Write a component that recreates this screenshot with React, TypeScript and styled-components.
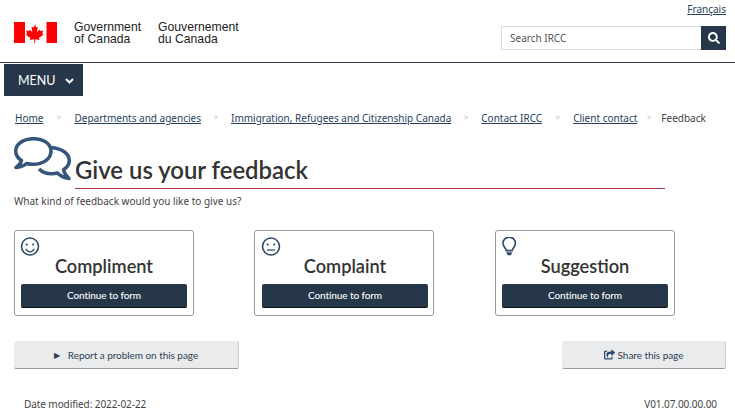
import React from "react";
import styled, { createGlobalStyle } from "styled-components";
import { FaSearch, FaShareSquare } from "react-icons/fa";

const Global = createGlobalStyle`
  html, body { margin: 0; padding: 0; background: #fff; }
  body { font-family: "Noto Sans", sans-serif; color: #333; width: 735px; height: 417px; overflow: hidden; }
`;

const Page = styled.div`display: flex; flex-direction: column; width: 735px;`;
const Header = styled.header`
  display: flex; justify-content: space-between; height: 62px; padding: 0 9px 0 14px;
  border-bottom: 1px solid #2e3a4d;
`;
const Brand = styled.div`display: flex; align-items: flex-start; padding-top: 21px;`;
const Flag = styled.svg`width: 43px; height: 22px; margin-right: 17px; margin-top: 1px;`;
const Signature = styled.div`
  font: 12.2px/11.5px "Liberation Sans", sans-serif; color: #222; margin: 1px 17px 0 0;
`;
const Tools = styled.div`display: flex; flex-direction: column; align-items: flex-end;`;
const Lang = styled.a`font-size: 10px; line-height: 14px; margin-top: 2px; color: #284162; text-decoration: underline;`;
const Search = styled.div`display: flex; width: 225px; height: 24px; margin-top: 10px;`;
const SearchInput = styled.div`
  flex: 1; border: 1px solid #dcdcdc; border-right: 0; font-size: 10px; line-height: 22px;
  padding-left: 8px; color: #555;
`;
const SearchButton = styled.div`
  width: 25px; background: #26374a; color: #fff; display: flex; align-items: center; justify-content: center;
`;
const MenuButton = styled.div`
  display: flex; align-items: center; width: 79px; height: 32px; margin: 1px 0 0 4px; padding-left: 14px; box-sizing: border-box;
  background: #26374a; color: #fff; font: 12.5px "Lato", sans-serif;
`;
const Chevron = styled.svg`width: 9px; height: 6px; margin-left: 9px; margin-top: 1px;`;
const Crumbs = styled.nav`
  display: flex; align-items: center; margin: 15px 0 0 15px; height: 14px; font-size: 10px; line-height: 14px;
`;
const Crumb = styled.a`color: #284162; text-decoration: underline;`;
const Sep = styled.span<{ $w: number }>`
  width: ${p => p.$w}px; text-align: center; color: #bbb; font-size: 7px; flex: none;
`;
const Current = styled.span`color: #444;`;
const TitleRow = styled.div`display: flex; align-items: flex-end; margin: 12px 0 0 14px; width: 651px;`;
const TitleIcon = styled.svg`width: 58px; height: 44px; margin-right: 3px; margin-bottom: 8px; flex: none;`;
const Title = styled.h1`
  flex: 1; margin: 0; font: 600 23.9px/31px "Lato", sans-serif; color: #333; border-bottom: 1px solid #af3c43; padding-bottom: 3px;
`;
const Question = styled.p`margin: 5px 0 0 14px; font-size: 10px; line-height: 14px; color: #444;`;
const Cards = styled.div`display: flex; margin: 22px 0 0 14px;`;
const Card = styled.div<{ $gap: number; $left: number }>`
  display: flex; flex-direction: column; box-sizing: border-box; width: 180px; height: 86px; margin-right: ${p => p.$gap}px;
  border: 1px solid #999; border-radius: 3px; padding: 6px ${p => 12 - p.$left}px 7px ${p => p.$left}px;
`;
const CardIcon = styled.svg`width: 20px; height: 20px; display: block; margin-left: -1px;`;
const CardTitle = styled.h2`
  margin: -4px 0 0; height: 31px; font: 600 18.2px/27px "Lato", sans-serif; color: #333; text-align: center;
`;
const ContinueButton = styled.div`
  height: 24px; background: #26374a; border-radius: 2px; border-bottom: 1px solid #111; box-sizing: border-box;
  color: #fff; font: 500 10px/23px "Lato", sans-serif; letter-spacing: -0.1px; text-align: center;
`;
const Actions = styled.div`display: flex; justify-content: space-between; margin: 25px 9px 0 14px;`;
const ActionButton = styled.div<{ $w: number }>`
  display: flex; align-items: center; justify-content: center; gap: 3px; box-sizing: border-box; width: ${p => p.$w}px; height: 28px;
  background: #eaebed; border-radius: 2px; border-bottom: 1px solid #999; border-right: 1px solid #ccc;
  font: 10px "Lato", sans-serif; letter-spacing: -0.05px; color: #2f3f52;
`;
const Tri = styled.span`font-size: 8px; margin-right: 5px; color: #2f3f52;`;
const Footer = styled.div`
  display: flex; justify-content: space-between; margin: 28px 18px 0 24px; font-size: 10px; line-height: 14px; color: #444; letter-spacing: -0.08px;
`;

const stroke = { fill: "none", stroke: "#2f4a6d", strokeWidth: 1.6 };

const Smile = () => (
  <CardIcon viewBox="0 0 20 20">
    <circle cx="10" cy="9.500" r="8.500" {...stroke} />
    <circle cx="6.800" cy="7.500" r="1.100" fill="#2f4a6d" />
    <circle cx="13.200" cy="7.500" r="1.100" fill="#2f4a6d" />
    <path d="M5.800 11.800c1 2 2.500 3 4.200 3s3.200-1 4.200-3" {...stroke} strokeWidth="1.300" />
  </CardIcon>
);
const Neutral = () => (
  <CardIcon viewBox="0 0 20 20">
    <circle cx="10" cy="9.500" r="8.500" {...stroke} />
    <circle cx="6.800" cy="7.500" r="1.100" fill="#2f4a6d" />
    <circle cx="13.200" cy="7.500" r="1.100" fill="#2f4a6d" />
    <path d="M6 13h8" {...stroke} strokeWidth="1.300" />
  </CardIcon>
);
const Bulb = () => (
  <CardIcon viewBox="0 0 20 20">
    <path d="M5.300 13.600c-.3-2.400-3.300-4-3.300-7.300a6.200 6.200 0 0 1 12.400 0c0 3.300-3 4.900-3.300 7.300z" {...stroke} />
    <path d="M5.600 15.200h5.200v1.500l-1.200 1.500H6.800l-1.200-1.500z" fill="#2f4a6d" />
  </CardIcon>
);

const forms = [
  { t: "Compliment", I: Smile, g: 60, l: 6 },
  { t: "Complaint", I: Neutral, g: 61, l: 7 },
  { t: "Suggestion", I: Bulb, g: 0, l: 6 },
];

export default function App() {
  return (
    <Page>
      <Global />
      <Header>
        <Brand>
          <Flag viewBox="0 0 43 22">
            <rect width="43" height="22" fill="#fff" />
            <rect width="11" height="21" fill="#f00" />
            <rect x="32.500" width="10.500" height="21" fill="#f00" />
            <path fill="#f00" d="M21.500 2l-2 3.500-2-.8.8 5.300-2.600-2.600-.6 1.700-3-.5.9 3.200-1.300.7 4.700 3.600-.7 1.800 4.500-.6V21h.9v-3.700l4.500.6-.7-1.800 4.700-3.600-1.300-.7.9-3.200-3 .5-.6-1.700-2.600 2.600.8-5.300-2 .8z" />
          </Flag>
          <Signature>Government<br />of Canada</Signature>
          <Signature>Gouvernement<br />du Canada</Signature>
        </Brand>
        <Tools>
          <Lang>Français</Lang>
          <Search>
            <SearchInput>Search IRCC</SearchInput>
            <SearchButton><FaSearch size={12} /></SearchButton>
          </Search>
        </Tools>
      </Header>
      <MenuButton>
        MENU
        <Chevron viewBox="0 0 9 6"><path d="M1 1l3.500 3.500L8 1" fill="none" stroke="#fff" strokeWidth="2" /></Chevron>
      </MenuButton>
      <Crumbs>
        <Crumb>Home</Crumb><Sep $w={31}>&gt;</Sep>
        <Crumb>Departments and agencies</Crumb><Sep $w={30}>&gt;</Sep>
        <Crumb>Immigration, Refugees and Citizenship Canada</Crumb><Sep $w={30}>&gt;</Sep>
        <Crumb>Contact IRCC</Crumb><Sep $w={31}>&gt;</Sep>
        <Crumb>Client contact</Crumb><Sep $w={24}>&gt;</Sep>
        <Current>Feedback</Current>
      </Crumbs>
      <TitleRow>
        <TitleIcon viewBox="0 0 58 44">
          <g fill="none" stroke="#34557c" strokeWidth="3.500" strokeLinejoin="round">
            <path d="M19.500 1.700C9.500 1.700 1.700 7 1.700 14c0 4 2.300 7.200 5.800 9.500-.6 2.500-2.500 5-5.500 7 4.500-.3 8-1.800 10.500-4 2 .5 4.200.8 6.500.8 10 0 18-5.500 18-13S29.500 1.700 19.500 1.700z" />
            <path d="M37 10.500c10 .8 18.300 5.500 18.300 13 0 3.800-2.300 7-5.800 9.300.6 3.200 2.500 6 5.500 8.700-5-.8-9-2.800-11.500-5.500-2 .5-3.500.7-5.500.7-5.500 0-10-1.700-13-4.700" />
          </g>
        </TitleIcon>
        <Title>Give us your feedback</Title>
      </TitleRow>
      <Question>What kind of feedback would you like to give us?</Question>
      <Cards>
        {forms.map(({ t, I, g, l }) => (
          <Card key={t} $gap={g} $left={l}>
            <I />
            <CardTitle>{t}</CardTitle>
            <ContinueButton>Continue to form</ContinueButton>
          </Card>
        ))}
      </Cards>
      <Actions>
        <ActionButton $w={225}><Tri>▶</Tri>Report a problem on this page</ActionButton>
        <ActionButton $w={164}><FaShareSquare size={11} color="#2f4a6d" />Share this page</ActionButton>
      </Actions>
      <Footer>
        <span>Date modified: 2022-02-22</span>
        <span>V01.07.00.00.00</span>
      </Footer>
    </Page>
  );
}
